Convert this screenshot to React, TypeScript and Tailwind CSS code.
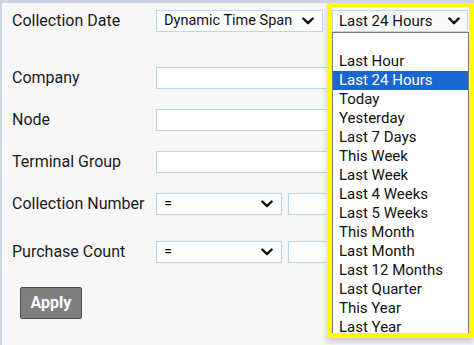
import React from "react";

const Chevron = () => (
  <svg width="12" height="8" viewBox="0 0 12 8" className="shrink-0">
    <path d="M1.3 1.5 L6 6.2 L10.7 1.5" fill="none" stroke="#111" strokeWidth="2.4" strokeLinecap="round" strokeLinejoin="round" />
  </svg>
);

const Select = ({ text, w }: { text: string; w: string }) => (
  <div className={`${w} h-[22px] bg-white border border-[#b5d9f5] flex items-center justify-between pl-[7px] pr-[8px] text-[14.5px] text-[#111]`}>
    <span className="whitespace-nowrap">{text}</span>
    <Chevron />
  </div>
);

const Input = ({ w }: { w: string }) => (
  <div className={`${w} h-[22px] bg-white border border-[#b5d9f5]`} />
);

const Label = ({ text }: { text: string }) => (
  <div className="w-[144px] text-[16px] text-[#1a1a1a] whitespace-nowrap">{text}</div>
);

const options = [
  "",
  "Last Hour",
  "Last 24 Hours",
  "Today",
  "Yesterday",
  "Last 7 Days",
  "This Week",
  "Last Week",
  "Last 4 Weeks",
  "Last 5 Weeks",
  "This Month",
  "Last Month",
  "Last 12 Months",
  "Last Quarter",
  "This Year",
  "Last Year",
];

export default function App() {
  return (
    <div
      className="relative w-[474px] h-[345px] overflow-hidden bg-[#f7f7f7] border-t-[3px] border-l-[2px] border-[#cdd4e4]"
      style={{ fontFamily: "Roboto, 'Liberation Sans', sans-serif" }}
    >
      <div className="flex flex-col pl-[10px] pt-[7px]">
        <div className="flex items-center h-[22px]">
          <Label text="Collection Date" />
          <Select text="Dynamic Time Span" w="w-[167px]" />
        </div>
        <div className="flex items-center h-[22px] mt-[35px]">
          <Label text="Company" />
          <Input w="w-[220px]" />
        </div>
        <div className="flex items-center h-[22px] mt-[20px]">
          <Label text="Node" />
          <Input w="w-[220px]" />
        </div>
        <div className="flex items-center h-[22px] mt-[20px]">
          <Label text="Terminal Group" />
          <Input w="w-[220px]" />
        </div>
        <div className="flex items-center h-[22px] mt-[20px]">
          <Label text="Collection Number" />
          <Select text="=" w="w-[126px]" />
          <div className="ml-[6px]">
            <Input w="w-[120px]" />
          </div>
        </div>
        <div className="flex items-center h-[22px] mt-[26px]">
          <Label text="Purchase Count" />
          <Select text="=" w="w-[126px]" />
          <div className="ml-[6px]">
            <Input w="w-[120px]" />
          </div>
        </div>
        <div className="mt-[24px] ml-[8px]">
          <button className="w-[62px] h-[32px] bg-[#7f7f7f] border border-[#4d4d4d] rounded-[2px] text-white font-bold text-[16px]">
            Apply
          </button>
        </div>
      </div>

      <div className="absolute left-[325px] top-0 w-[147px] h-[335px] border-[#ffff00] border-t-[4px] border-l-[5px] border-r-[5px] border-b-[5px] bg-white shadow-[0_4px_6px_rgba(0,0,0,0.18)] overflow-hidden">
        <div className="h-[3px] bg-[#fafafa]" />
        <div className="w-[136px] h-[22px] bg-[#fafafa] border border-[#b5d9f5] flex items-center justify-between pl-[6px] pr-[7px] text-[15px] text-[#111]">
          <span className="whitespace-nowrap">Last 24 Hours</span>
          <Chevron />
        </div>
        <div className="w-[137px] border border-[#7a7a7a] bg-white">
          {options.map((o, i) => (
            <div
              key={i}
              className={`h-[19px] leading-[19px] pl-[6px] text-[15px] whitespace-nowrap ${
                o === "Last 24 Hours" ? "bg-[#1967d2] text-white" : "text-[#111]"
              }`}
            >
              {o}
            </div>
          ))}
        </div>
      </div>
    </div>
  );
}
